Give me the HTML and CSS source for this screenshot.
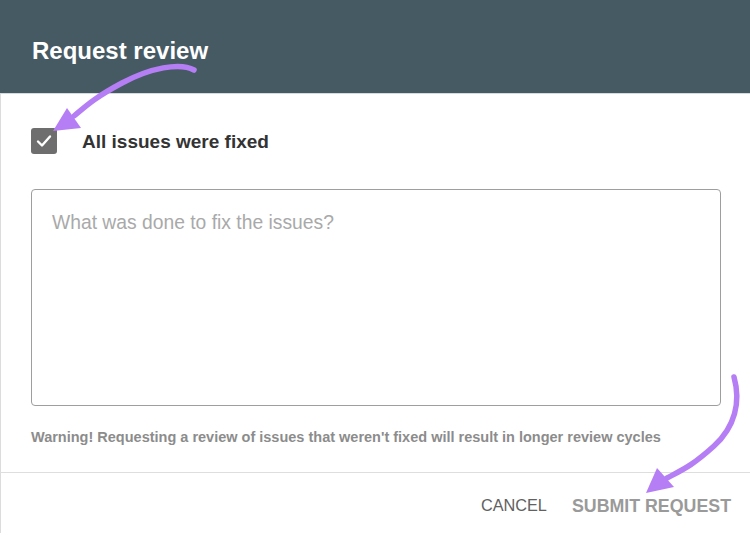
FILE: index.html
```html
<!doctype html>
<html lang="en">

<head>
  <meta charset="utf-8">
  <title>Request review</title>
  <link rel="stylesheet" href="styles.css">
</head>

<body>
  <section class="dialog">
    <header class="dialog-header">
      <h1>Request review</h1>
    </header>

    <div class="dialog-content">
      <label class="check-row">
        <span class="checkbox">
          <svg viewBox="0 0 26 26" width="26" height="26">
            <path d="M7 13.5l4 4 8-9" fill="none" stroke="#fff" stroke-width="2.4" stroke-linecap="round" stroke-linejoin="round"/>
          </svg>
        </span>
        <span class="check-label">All issues were fixed</span>
      </label>

      <textarea class="notes" placeholder="What was done to fix the issues?"></textarea>

      <p class="warning">Warning! Requesting a review of issues that weren't fixed will result in longer review cycles</p>
    </div>

    <footer class="dialog-actions">
      <button class="btn btn-cancel">CANCEL</button>
      <button class="btn btn-submit">SUBMIT REQUEST</button>
    </footer>
  </section>

  <!-- callout arrows -->
  <svg class="callouts" viewBox="0 0 750 540" width="750" height="540">
    <g fill="none" stroke="#b57ef5" stroke-width="5.5" stroke-linecap="round">
      <path d="M194 70 C180 62, 150 68, 122 83 S 86 106, 74 116"/>
      <path d="M734 377 C741 402, 735 427, 714 446 S 684 469, 667 478"/>
    </g>
    <g fill="#b57ef5">
      <polygon points="53,131 67,108 81,128"/>
      <polygon points="646,493 657,468 674,487"/>
    </g>
  </svg>
</body>

</html>
```

FILE: styles.css
```css
* {
  font-family: "Liberation Sans", Arial, Helvetica, sans-serif;
  box-sizing: border-box;
}

body {
  margin: 0;
  background: #fff;
}

.dialog {
  width: 100%;
  height: 533px;
  display: flex;
  flex-direction: column;
  border-left: 1px solid #dcdcdc;
}

.dialog-header {
  height: 94px;
  margin-left: -1px;
  background-color: #465a64;
  border-bottom: 1px solid #d5dadd;
  padding: 0 32px;
  display: flex;
  align-items: center;
}

.dialog-header h1 {
  margin: 8px 0 0;
  color: #fff;
  font-size: 24px;
  font-weight: bold;
}

.dialog-content {
  padding: 33px 30px 0;
}

.check-row {
  display: flex;
  align-items: center;
  gap: 25px;
  height: 27px;
}

.checkbox {
  width: 26px;
  height: 26px;
  border-radius: 3px;
  background-color: #6e6e6e;
  display: flex;
}

.check-label {
  padding-top: 3px;
  font-size: 19px;
  font-weight: bold;
  color: #333;
}

.notes {
  display: block;
  margin-top: 35px;
  width: 690px;
  height: 217px;
  border: 1px solid #9e9e9e;
  border-radius: 4px;
  padding: 21px 20px;
  font-size: 19.3px;
  line-height: 1.2;
  resize: none;
  outline: none;
}

.notes::placeholder {
  color: #a9a9a9;
}

.warning {
  margin: 23px 0 26px;
  font-size: 14.5px;
  line-height: 1.2;
  font-weight: bold;
  color: #8c8c8c;
}

.dialog-actions {
  flex: 1;
  margin-left: -1px;
  border-top: 1px solid #dedede;
  padding: 23px 19px 0 0;
  display: flex;
  justify-content: flex-end;
  align-items: flex-start;
  gap: 25px;
}

.btn {
  border: none;
  background: none;
  padding: 0;
  line-height: 1.2;
  cursor: pointer;
}

.btn-cancel {
  font-size: 16.3px;
  color: #616161;
}

.btn-submit {
  font-size: 17.8px;
  font-weight: bold;
  color: #9a9a9a;
}

.callouts {
  position: absolute;
  top: 0;
  left: 0;
  pointer-events: none;
}
```
